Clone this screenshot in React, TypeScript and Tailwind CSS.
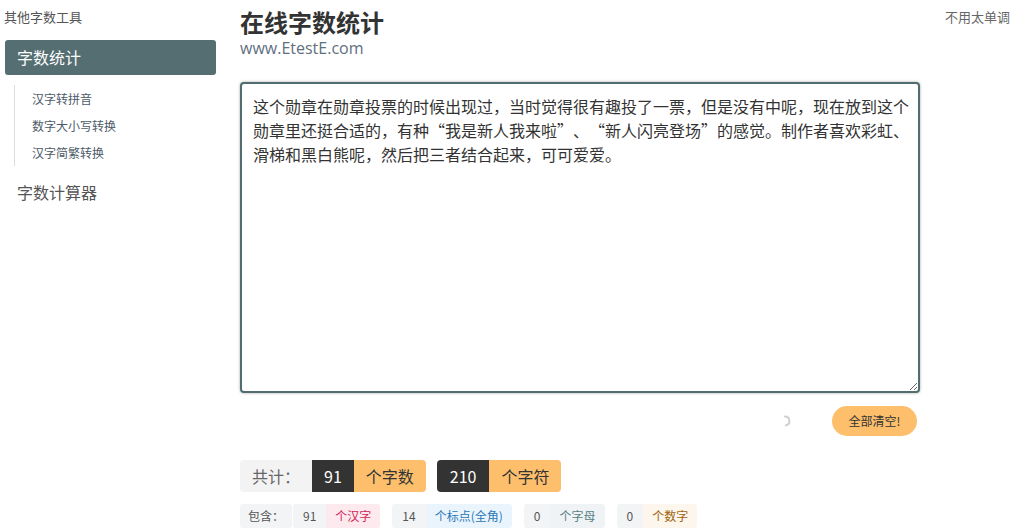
import React from 'react';

const sample =
  '这个勋章在勋章投票的时候出现过，当时觉得很有趣投了一票，但是没有中呢，现在放到这个勋章里还挺合适的，有种“我是新人我来啦”、“新人闪亮登场”的感觉。制作者喜欢彩虹、滑梯和黑白熊呢，然后把三者结合起来，可可爱爱。';

const font = { fontFamily: '"Noto Sans CJK SC", "Open Sans", sans-serif' };

const subLinks = ['汉字转拼音', '数字大小写转换', '汉字简繁转换'];

interface ChipProps {
  num: number;
  label: string;
  labelClass: string;
}

const Chip: React.FC<ChipProps> = ({ num, label, labelClass }) => (
  <div className="flex h-[24px] rounded-[3px] overflow-hidden text-[12px] leading-[24px]">
    <span className="bg-[#f3f4f5] text-[#555] px-[10px]">{num}</span>
    <span className={`px-[9px] ${labelClass}`}>{label}</span>
  </div>
);

const Sidebar: React.FC = () => (
  <aside className="w-[216px] shrink-0 pl-[4px]">
    <div className="pt-[9px] text-[13px] leading-[16px] text-[#555]">其他字数工具</div>
    <div className="ml-[1px] mt-[15px] h-[35px] rounded-[3px] bg-[#546e72] px-3 text-[16px] leading-[35px] text-white">
      字数统计
    </div>
    <ul className="ml-[10px] mt-[10px] border-l border-[#ddd] pl-[17px]">
      {subLinks.map((s) => (
        <li key={s} className="h-[27px] text-[12px] leading-[27px] text-[#4d5a6a]">
          {s}
        </li>
      ))}
    </ul>
    <div className="ml-[1px] mt-[9px] h-[35px] px-3 text-[16px] leading-[35px] text-[#555]">
      字数计算器
    </div>
  </aside>
);

export default function App() {
  return (
    <div className="flex min-h-[532px] bg-white [text-spacing-trim:space-all]" style={font}>
      <Sidebar />
      <main className="ml-[24px] w-[680px] shrink-0 pt-[8px]">
        <h1 className="text-[24px] font-bold leading-[28px] text-[#333]">在线字数统计</h1>
        <div className="mt-[2px] text-[16px] leading-[20px] text-[#5f6f80]" style={{ fontFamily: '"Open Sans", sans-serif' }}>
          www.EtestE.com
        </div>
        <textarea
          defaultValue={sample}
          className="mt-[24px] block h-[311px] w-[680px] resize-y rounded-[4px] border-2 border-[#526d70] bg-white pl-[11px] pr-[4px] pt-[10px] text-[16px] leading-[24px] text-[#333] shadow-[0_0_3px_rgba(0,0,0,0.35)] outline-none [text-spacing-trim:space-all]"
        />
        <div className="mt-[13px] flex items-center justify-end pr-[3px]">
          <svg width="12" height="12" viewBox="0 0 12 12" className="mr-[41px]">
            <path d="M6 1.5 A4.5 4.5 0 0 1 6.8 10.4" fill="none" stroke="#cfcfcf" strokeWidth="2" strokeLinecap="round" />
          </svg>
          <button className="h-[30px] w-[85px] rounded-full bg-[#fdbf6c] text-[12px] text-[#333]">全部清空!</button>
        </div>
        <div className="mt-[24px] flex gap-[11px] text-[16px] leading-[32px]">
          <div className="flex h-[32px] overflow-hidden rounded-[4px]">
            <span className="bg-[#f3f3f3] px-3 text-[#666]">共计：</span>
            <span className="bg-[#333] px-3 text-white">91</span>
            <span className="bg-[#fdbf6c] px-3 text-[#333]">个字数</span>
          </div>
          <div className="flex h-[32px] overflow-hidden rounded-[4px]">
            <span className="bg-[#333] px-[13px] text-white">210</span>
            <span className="bg-[#fdbf6c] px-3 text-[#333]">个字符</span>
          </div>
        </div>
        <div className="mt-[12px] flex items-center">
          <span className="h-[24px] rounded-[3px] bg-[#f3f4f5] px-[8px] text-[12px] leading-[24px] text-[#555]">包含：</span>
          <div className="ml-[1px] flex gap-[12px]">
            <Chip num={91} label="个汉字" labelClass="bg-[#fdeaef] text-[#d2275a]" />
            <Chip num={14} label="个标点(全角)" labelClass="bg-[#eaf4fc] text-[#2a78b8]" />
            <Chip num={0} label="个字母" labelClass="bg-[#eff3f5] text-[#5a7f86]" />
            <Chip num={0} label="个数字" labelClass="bg-[#fdf6ec] text-[#a0640f]" />
          </div>
        </div>
      </main>
      <div className="flex-1 pr-[7px] pt-[9px] text-right text-[13px] leading-[16px] text-[#666]">不用太单调</div>
    </div>
  );
}
